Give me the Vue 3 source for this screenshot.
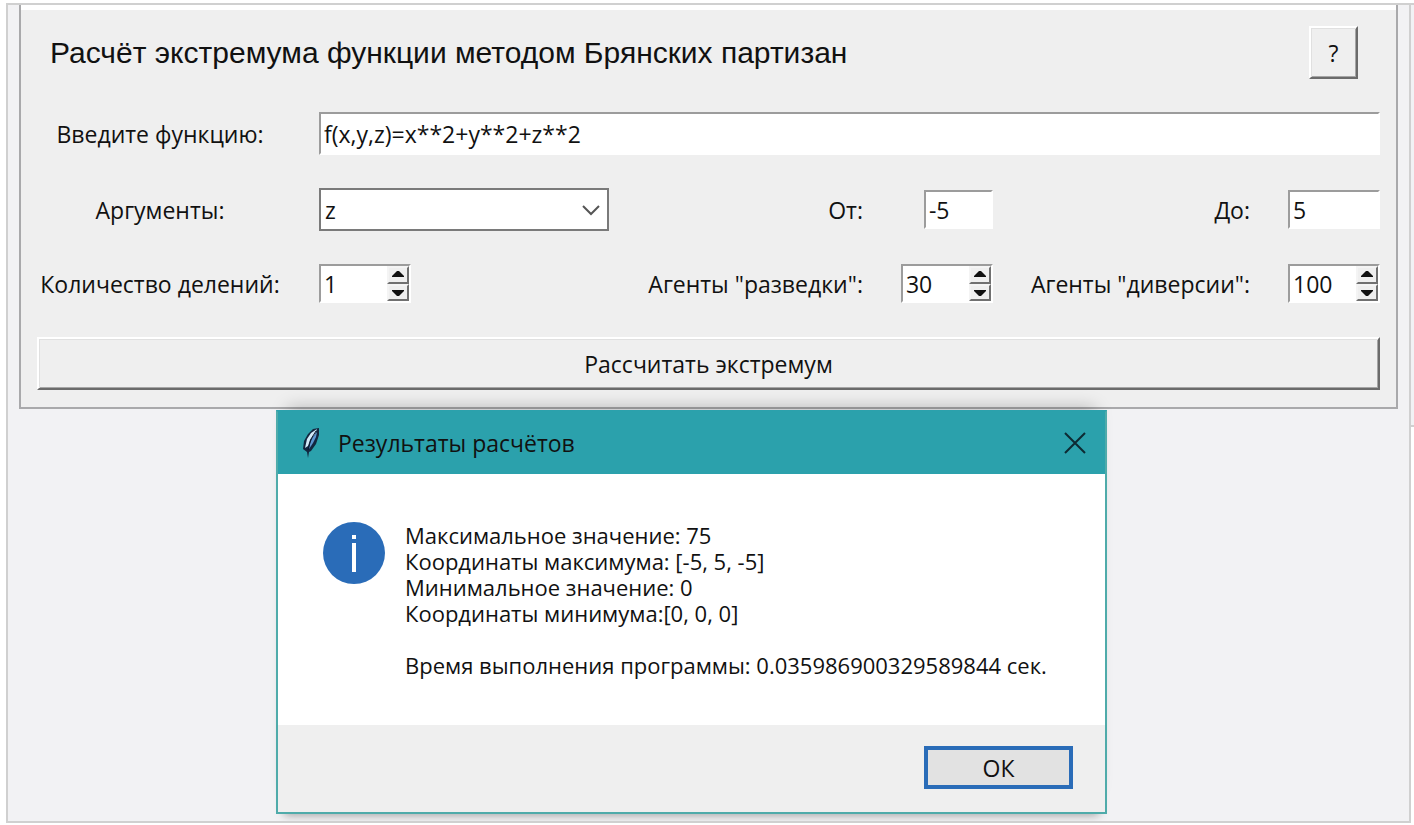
<script setup>
import { ref } from 'vue';

const form = ref({
  expression: 'f(x,y,z)=x**2+y**2+z**2',
  argument: 'z',
  from: '-5',
  to: '5',
  divisions: 1,
  scouts: 30,
  saboteurs: 100,
});

const argumentNames = ['x', 'y', 'z'];

const isDialogOpen = ref(true);

const resultLines = [
  'Максимальное значение: 75',
  'Координаты максимума: [-5, 5, -5]',
  'Минимальное значение: 0',
  'Координаты минимума:[0, 0, 0]',
  '',
  'Время выполнения программы: 0.035986900329589844 сек.',
];

const step = (field, delta) => {
  form.value[field] = Math.max(1, Number(form.value[field]) + delta);
};

const calculate = () => {
  isDialogOpen.value = true;
};

const closeDialog = () => {
  isDialogOpen.value = false;
};
</script>

<template>
  <div class="page">
    <main class="frame">
      <form class="panel" @submit.prevent="calculate">
        <header class="panel-header">
          <h1 class="title">Расчёт экстремума функции методом Брянских партизан</h1>
          <button type="button" class="raised help-button">?</button>
        </header>

        <div class="fields">
          <label for="expression" class="label-center">Введите функцию:</label>
          <input id="expression" v-model="form.expression" type="text" class="sunken expression" />

          <label for="argument" class="label-center">Аргументы:</label>
          <div class="select-wrap">
            <select id="argument" v-model="form.argument" class="select">
              <option v-for="name in argumentNames" :key="name" :value="name">{{ name }}</option>
            </select>
            <svg class="chevron" viewBox="0 0 18 12" aria-hidden="true">
              <path d="M1 2 L9 10 L17 2" fill="none" stroke="#555" stroke-width="2" />
            </svg>
          </div>
          <label for="from" class="label-right">От:</label>
          <input id="from" v-model="form.from" type="text" class="sunken from-input" />
          <label for="to" class="label-right">До:</label>
          <input id="to" v-model="form.to" type="text" class="sunken" />

          <label for="divisions" class="label-center">Количество делений:</label>
          <div class="sunken spinner">
            <input id="divisions" v-model="form.divisions" type="number" class="spinner-input" />
            <div class="spinner-buttons">
              <button type="button" class="spin" aria-label="Больше" @click="step('divisions', 1)">
                <svg viewBox="0 0 12 7"><path d="M5 0 H7 L12 5 V6 H0 V5 Z" /></svg>
              </button>
              <button type="button" class="spin" aria-label="Меньше" @click="step('divisions', -1)">
                <svg viewBox="0 0 12 7"><path d="M5 7 H7 L12 2 V1 H0 V2 Z" /></svg>
              </button>
            </div>
          </div>
          <label for="scouts" class="label-right">Агенты "разведки":</label>
          <div class="sunken spinner">
            <input id="scouts" v-model="form.scouts" type="number" class="spinner-input" />
            <div class="spinner-buttons">
              <button type="button" class="spin" aria-label="Больше" @click="step('scouts', 1)">
                <svg viewBox="0 0 12 7"><path d="M5 0 H7 L12 5 V6 H0 V5 Z" /></svg>
              </button>
              <button type="button" class="spin" aria-label="Меньше" @click="step('scouts', -1)">
                <svg viewBox="0 0 12 7"><path d="M5 7 H7 L12 2 V1 H0 V2 Z" /></svg>
              </button>
            </div>
          </div>
          <label for="saboteurs" class="label-right">Агенты "диверсии":</label>
          <div class="sunken spinner">
            <input id="saboteurs" v-model="form.saboteurs" type="number" class="spinner-input" />
            <div class="spinner-buttons">
              <button type="button" class="spin" aria-label="Больше" @click="step('saboteurs', 1)">
                <svg viewBox="0 0 12 7"><path d="M5 0 H7 L12 5 V6 H0 V5 Z" /></svg>
              </button>
              <button type="button" class="spin" aria-label="Меньше" @click="step('saboteurs', -1)">
                <svg viewBox="0 0 12 7"><path d="M5 7 H7 L12 2 V1 H0 V2 Z" /></svg>
              </button>
            </div>
          </div>
        </div>

        <button type="submit" class="raised submit-button">Рассчитать экстремум</button>
      </form>

      <section v-if="isDialogOpen" class="dialog" role="dialog" aria-labelledby="dialog-title">
        <header class="dialog-header">
          <svg class="feather" viewBox="0 0 18 32" aria-hidden="true">
            <path d="M17 1 L17 8 L14 17 L9 24 L7 25 L6 31 L5 25 L1 22 L2 14 L6 7 L11 2 Z" fill="#12263f" />
            <path d="M15 2 L9 6 L5 12 L3 21 L6 19 L8 13 L13 7 Z" fill="#d3eaf8" />
            <path d="M15 5 L14 10 L11 16 L7 22 L8 16 L11 10 Z" fill="#5c95d0" />
            <path d="M14 4 L9 12 L6 23" fill="none" stroke="#0b1830" stroke-width="1" />
          </svg>
          <h2 id="dialog-title" class="dialog-title">Результаты расчётов</h2>
          <button type="button" class="close-button" aria-label="Закрыть" @click="closeDialog">
            <svg viewBox="0 0 22 22">
              <path d="M1 1 L21 21 M21 1 L1 21" fill="none" stroke="#0d2a33" stroke-width="2" />
            </svg>
          </button>
        </header>
        <div class="dialog-body">
          <svg class="info-icon" viewBox="0 0 62 62" aria-hidden="true">
            <circle cx="31" cy="31" r="31" fill="#2a6cb8" />
            <rect x="29" y="13" width="4" height="4" fill="#fff" />
            <rect x="29" y="21" width="4" height="29" fill="#fff" />
          </svg>
          <div class="results">
            <p v-for="(line, index) in resultLines" :key="index">{{ line }}</p>
          </div>
        </div>
        <footer class="dialog-footer">
          <button type="button" class="ok-button" @click="closeDialog">ОК</button>
        </footer>
      </section>
    </main>
    <div class="window-edge"></div>
  </div>
</template>

<style>
body {
  background-color: #ffffff;
}
</style>

<style scoped>
* {
  box-sizing: border-box;
}

.page {
  display: flex;
  align-items: flex-start;
  padding: 3px 0 0 6px;
  color: #111;
  font-family: "Open Sans", "Noto Sans", sans-serif;
  font-size: 23px;
  line-height: 26px;
}

.frame {
  flex: 1;
  min-width: 0;
  padding: 0 11px 7px;
  border: 2px solid #d0d0d0;
  background-color: #f2f2f4;
  overflow: hidden;
}

.window-edge {
  width: 3px;
  height: 424px;
  border: solid #d0d0d0;
  border-width: 2px 0;
  background-color: #f2f2f4;
}

.panel {
  padding: 21px 16px 17px;
  border: 2px solid #a9a9ab;
  border-top: 0;
  background-color: #efefef;
  box-shadow: inset 0 5px 0 #ffffff;
}

.panel-header {
  display: flex;
  align-items: center;
  justify-content: space-between;
  padding: 0 22px 0 13px;
}

.title {
  margin: 0;
  font-family: "Liberation Sans", Arial, sans-serif;
  font-size: 30px;
  font-weight: 400;
  line-height: 32px;
}

.fields {
  display: grid;
  grid-template-columns: 282px 290px minmax(0, 1fr) 92px auto 92px;
  grid-template-rows: 43px 43px 39px;
  row-gap: 33px;
  align-items: center;
  margin: 33px 0 34px;
}

.label-center {
  padding-right: 36px;
  text-align: center;
  white-space: nowrap;
}

.label-right {
  padding-right: 38px;
  padding-left: 38px;
  text-align: right;
  white-space: nowrap;
}

input,
select,
button {
  margin: 0;
  padding: 0;
  border-radius: 0;
  color: inherit;
  font: inherit;
}

.raised {
  border: 2px solid;
  border-color: #ffffff #6b6b6b #6b6b6b #ffffff;
  background-color: #efefef;
  box-shadow: inset 1px 1px 0 #e0e0e0, inset -1px -1px 0 #a6a6a6;
}

.help-button {
  width: 49px;
  height: 53px;
}

.submit-button {
  display: block;
  width: 100%;
  height: 53px;
}

.sunken {
  width: 100%;
  height: 39px;
  padding-left: 3px;
  border: 2px solid;
  border-color: #9c9c9c #ffffff #ffffff #9c9c9c;
  background-color: #ffffff;
}

.expression {
  grid-column: 2 / -1;
  height: 43px;
}

.from-input {
  width: 69px;
  justify-self: end;
}

.select-wrap {
  position: relative;
}

.select {
  display: block;
  width: 100%;
  height: 43px;
  padding-left: 4px;
  border: 2px solid #7a7a7a;
  background-color: #ffffff;
  appearance: none;
}

.chevron {
  position: absolute;
  top: 16px;
  right: 9px;
  width: 18px;
  height: 12px;
  pointer-events: none;
}

.spinner {
  display: flex;
  max-width: 92px;
}

.spinner-input {
  flex: 1;
  min-width: 0;
  border: 0;
  outline: none;
  background-color: transparent;
  appearance: textfield;
}

.spinner-input::-webkit-inner-spin-button {
  appearance: none;
}

.spinner-buttons {
  display: flex;
  flex-direction: column;
  width: 22px;
}

.spin {
  display: flex;
  flex: 1;
  align-items: center;
  justify-content: center;
  border: 2px solid;
  border-color: #f4f4f4 #707070 #707070 #f4f4f4;
  background-color: #efefef;
}

.spin svg {
  width: 12px;
  height: 7px;
  fill: #111;
}

.dialog {
  max-width: 831px;
  margin-top: 1px;
  margin-left: 257px;
  border: 2px solid #4fabaa;
  border-top-color: #2ba1ac;
  background-color: #ffffff;
  box-shadow: 0 -14px 16px -12px rgba(0, 0, 0, 0.25), 0 9px 9px -8px rgba(0, 0, 0, 0.35);
}

.dialog-header {
  display: flex;
  align-items: center;
  height: 62px;
  padding: 0 19px 0 24px;
  background-color: #2ba1ac;
}

.feather {
  width: 18px;
  height: 32px;
}

.dialog-title {
  flex: 1;
  margin: 0 0 0 18px;
  font-size: 23px;
  font-weight: 400;
}

.close-button {
  display: flex;
  border: 0;
  background: none;
}

.close-button svg {
  width: 22px;
  height: 22px;
}

.dialog-body {
  display: flex;
  gap: 20px;
  padding: 48px 44px 47px 45px;
}

.info-icon {
  flex: none;
  width: 62px;
  height: 62px;
}

.results {
  font-size: 22px;
}

.results p {
  min-height: 26px;
  margin: 0;
}

.dialog-footer {
  display: flex;
  justify-content: flex-end;
  padding: 21px 32px 23px;
  background-color: #efefef;
}

.ok-button {
  width: 149px;
  height: 43px;
  border: 4px solid #2a6cb8;
  background-color: #e2e2e2;
}
</style>
